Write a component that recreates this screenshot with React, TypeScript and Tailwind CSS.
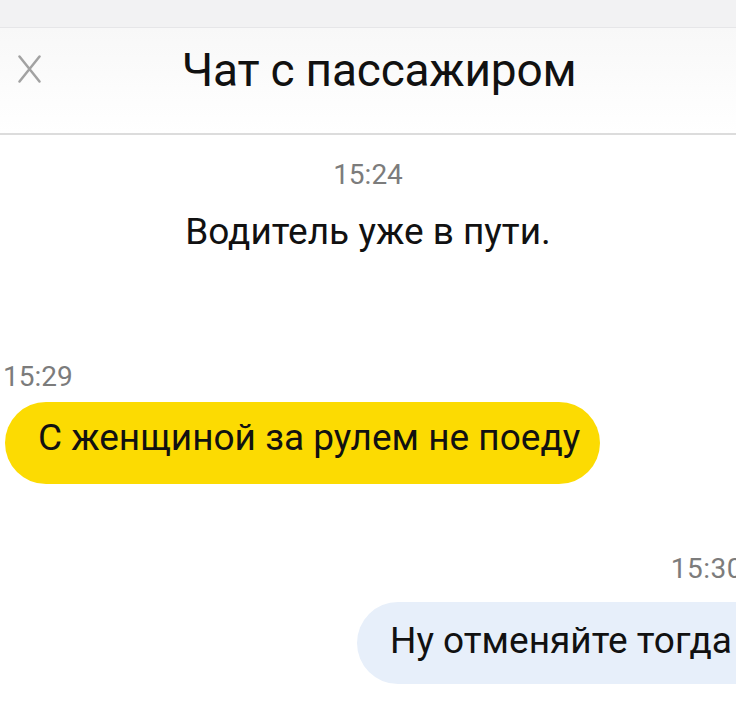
export default function App() {
  return (
    <div className="w-[736px] h-[701px] overflow-hidden bg-white font-['Roboto',sans-serif] text-[#111]">
      {/* status strip */}
      <div className="h-[28px] bg-[#f2f2f3] border-b border-[#e6e6e8]" />

      {/* header */}
      <header className="relative h-[107px] flex justify-center pt-[19px] border-b-2 border-[#dcdcdc] bg-gradient-to-b from-[#f8f8f8] to-white">
        <svg className="absolute left-[18px] top-[27px]" width="23" height="28" viewBox="0 0 23 28" aria-hidden="true">
          <path d="M1.5 1.5 L21.5 26.5 M21.5 1.5 L1.5 26.5" stroke="#a2a2a2" strokeWidth="2.5" strokeLinecap="round" />
        </svg>
        <h1 className="text-[46px] leading-none tracking-[-0.2px] ml-[22px]">Чат с пассажиром</h1>
      </header>

      {/* messages */}
      <div className="flex flex-col">
        <div className="flex flex-col items-center pt-[26px]">
          <span className="text-[28px] leading-none text-[#7c7c7c]">15:24</span>
          <p className="mt-[24px] text-[37px] leading-none">Водитель уже в пути.</p>
        </div>

        <div className="mt-[113px] pl-[3px]">
          <span className="text-[28px] leading-none text-[#7c7c7c]">15:29</span>
        </div>
        <div className="mt-[9px] ml-[5px] w-[595px] h-[82px] rounded-[41px] bg-[#fcdb02] pt-[17px] pl-[33px]">
          <span className="block text-[37px] leading-none">С женщиной за рулем не поеду</span>
        </div>

        <div className="mt-[71px] flex justify-end mr-[-7px]">
          <span className="text-[28px] leading-none tracking-[0.5px] text-[#7c7c7c]">15:30</span>
        </div>
        <div className="mt-[19px] ml-[357px] w-[420px] h-[82px] shrink-0 rounded-[41px] bg-[#e7effa] pt-[20px] pl-[33px]">
          <span className="block text-[37px] leading-none">Ну отменяйте тогда</span>
        </div>
      </div>
    </div>
  );
}
